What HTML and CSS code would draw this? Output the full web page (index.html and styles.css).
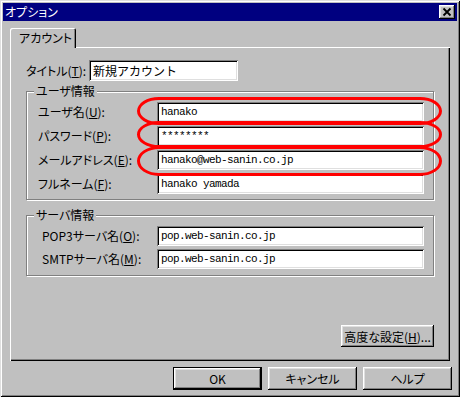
FILE: index.html
```html
<!DOCTYPE html>
<html lang="ja">
<head>
    <meta charset="UTF-8">
    <meta name="viewport" content="width=device-width, initial-scale=1.0">
    <title>オプション</title>
    <link rel="stylesheet" href="styles.css">
</head>
<body>
    <div class="window">
        <div class="titlebar">
            <span class="title">オプション</span>
            <button class="close-btn" type="button">
                <svg width="16" height="14" viewBox="0 0 16 14">
                    <path d="M4.5 3.5 L11.5 10.5 M11.5 3.5 L4.5 10.5" stroke="#000" stroke-width="1.8" fill="none"/>
                </svg>
            </button>
        </div>

        <div class="tabs">
            <div class="tab">アカウント</div>
        </div>

        <div class="panel">
            <div class="title-row">
                <label>タイトル(<u>T</u>):</label>
                <input class="input input-title" type="text" value="新規アカウント">
            </div>

            <fieldset class="group">
                <legend>ユーザ情報</legend>
                <div class="rows">
                    <label>ユーザ名(<u>U</u>):</label>
                    <input class="input mono" type="text" value="hanako">
                    <label>パスワード(<u>P</u>):</label>
                    <input class="input mono" type="text" value="********">
                    <label>メールアドレス(<u>E</u>):</label>
                    <input class="input mono" type="text" value="hanako@web-sanin.co.jp">
                    <label>フルネーム(<u>F</u>):</label>
                    <input class="input mono" type="text" value="hanako yamada">
                </div>
            </fieldset>

            <fieldset class="group group-server">
                <legend>サーバ情報</legend>
                <div class="rows rows-server">
                    <label>POP3サーバ名(<u>O</u>):</label>
                    <input class="input mono" type="text" value="pop.web-sanin.co.jp">
                    <label>SMTPサーバ名(<u>M</u>):</label>
                    <input class="input mono" type="text" value="pop.web-sanin.co.jp">
                </div>
            </fieldset>

            <button class="btn btn-advanced" type="button">高度な設定(<u>H</u>)...</button>
        </div>

        <div class="actions">
            <button class="btn btn-default" type="button">OK</button>
            <button class="btn" type="button">キャンセル</button>
            <button class="btn" type="button">ヘルプ</button>
        </div>

        <!-- red marks drawn over the account fields -->
        <div class="mark mark-1"></div>
        <div class="mark mark-2"></div>
        <div class="mark mark-3"></div>
    </div>
</body>
</html>
```

FILE: styles.css
```css
/* Win95 style options dialog */
body {
    margin: 0;
    background-color: #c0c0c0;
    font-family: "Noto Sans CJK JP", sans-serif;
    font-size: 12px;
}
.window {
    position: relative;
    width: 460px;
    height: 397px;
    box-sizing: border-box;
    padding: 3px;
    display: flex;
    flex-direction: column;
    background: #c0c0c0;
    color: #000;
    font-feature-settings: "palt";
    box-shadow: inset 1px 1px #dfdfdf, inset -1px -1px #000, inset 2px 2px #fff, inset -2px -2px #808080;
}
.titlebar {
    height: 18px;
    flex: none;
    display: flex;
    align-items: center;
    justify-content: space-between;
    padding: 0 2px;
    background: #000080;
    color: #fff;
    line-height: 18px;
}
.close-btn {
    width: 16px;
    height: 14px;
    padding: 0;
    border: 0;
    display: flex;
    background: #c0c0c0;
    box-shadow: inset -1px -1px #000, inset 1px 1px #fff, inset -2px -2px #808080, inset 2px 2px #dfdfdf;
}
.tabs {
    display: flex;
    flex: none;
    margin-top: 7px;
    padding-left: 7px;
}
.tab {
    position: relative;
    width: 66px;
    height: 20px;
    box-sizing: border-box;
    margin-bottom: -1px;
    padding-left: 9px;
    line-height: 19px;
    background: #c0c0c0;
    border-radius: 2px 2px 0 0;
    box-shadow: inset 1px 1px #fff, inset -1px 0 #000, inset -2px 0 #808080;
}
.panel {
    flex: 1;
    margin: 0 7px;
    padding: 13px 16px 14px;
    display: flex;
    flex-direction: column;
    box-shadow: inset 1px 1px #fff, inset -1px -1px #000, inset -2px -2px #808080;
}
.title-row {
    display: flex;
    align-items: center;
}
.title-row label {
    width: 63px;
}
label {
    line-height: 20px;
    white-space: nowrap;
}
.input {
    height: 20px;
    box-sizing: border-box;
    margin: 0;
    padding: 0 4px;
    border: 0;
    outline: none;
    background: #fff;
    color: #000;
    font-family: "Noto Sans CJK JP", sans-serif;
    font-size: 12px;
    box-shadow: inset 1px 1px #808080, inset -1px -1px #fff, inset 2px 2px #000, inset -2px -2px #dfdfdf;
}
.input-title {
    width: 149px;
    height: 21px;
}
.mono {
    font-family: "Liberation Mono", monospace;
    font-size: 11px;
    letter-spacing: -0.6px;
}
.group {
    margin: 3px 0 0;
    padding: 4px 9px 5px 7px;
    border: 1px solid #808080;
    box-shadow: inset 1px 1px #fff, 1px 1px #fff;
}
.group legend {
    padding: 0 2px;
    line-height: 14px;
    background: #c0c0c0;
}
.group-server {
    margin-top: 8px;
    padding-bottom: 6px;
}
.rows {
    display: grid;
    grid-template-columns: 119px 267px;
    row-gap: 4px;
    align-items: center;
    padding-left: 4px;
}
.rows-server {
    grid-template-columns: 115px 267px;
    row-gap: 3px;
    padding-left: 8px;
}
.btn {
    width: 89px;
    height: 23px;
    padding: 0;
    border: 0;
    background: #c0c0c0;
    color: #000;
    font-family: "Noto Sans CJK JP", sans-serif;
    font-size: 12px;
    font-feature-settings: "palt";
    box-shadow: inset -1px -1px #000, inset 1px 1px #fff, inset -2px -2px #808080, inset 2px 2px #dfdfdf;
}
.btn-default {
    border: 1px solid #000;
}
.btn-advanced {
    width: 93px;
    height: 22px;
    margin-top: auto;
    align-self: flex-end;
}
.actions {
    display: flex;
    flex: none;
    justify-content: flex-end;
    gap: 6px;
    margin: 6px 5px 4px 0;
}
.mark {
    position: absolute;
    left: 137px;
    width: 305px;
    box-sizing: border-box;
    border: 3px solid #f00;
    border-radius: 22px / 50%;
    pointer-events: none;
}
.mark-1 {
    top: 97px;
    height: 28px;
}
.mark-2 {
    top: 121px;
    height: 27px;
}
.mark-3 {
    top: 146px;
    height: 30px;
}
```
